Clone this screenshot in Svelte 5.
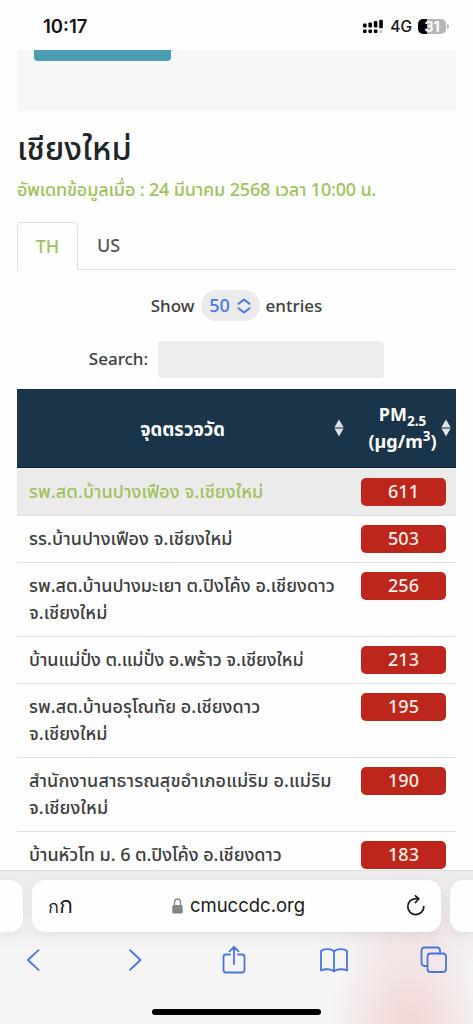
<script>
  const rows = [
    { lines: ['รพ.สต.บ้านปางเฟือง จ.เชียงใหม่'], value: 611, active: true, tracking: 0.08 },
    { lines: ['รร.บ้านปางเฟือง จ.เชียงใหม่'], value: 503, tracking: 0.08 },
    { lines: ['รพ.สต.บ้านปางมะเยา ต.ปิงโค้ง อ.เชียงดาว', 'จ.เชียงใหม่'], value: 256, tracking: 0.03 },
    { lines: ['บ้านแม่ปั๋ง ต.แม่ปั๋ง อ.พร้าว จ.เชียงใหม่'], value: 213, tracking: -0.08 },
    { lines: ['รพ.สต.บ้านอรุโณทัย อ.เชียงดาว', 'จ.เชียงใหม่'], value: 195, tracking: 0.04 },
    { lines: ['สำนักงานสาธารณสุขอำเภอแม่ริม อ.แม่ริม', 'จ.เชียงใหม่'], value: 190, tracking: 0.13 },
    { lines: ['บ้านหัวโท ม. 6 ต.ปิงโค้ง อ.เชียงดาว'], value: 183, tracking: -0.06 }
  ];
</script>

{#snippet sorter()}
  <svg class="sorter" width="10" height="18" viewBox="0 0 10 18">
    <path d="M5 0.5 9.5 8H.5Z" fill="#dde2e5" />
    <path d="M5 17.5 9.5 9.5H.5Z" fill="#dde2e5" />
    <path d="M.5 8.7h9" stroke="#7d8588" stroke-width="1.4" />
  </svg>
{/snippet}

<div class="phone">
  <header class="status">
    <span class="time">10:17</span>
    <div class="indicators">
      <svg width="20" height="15" viewBox="0 0 20 15">
        <g fill="#000">
          <rect x="0" y="4.5" width="3.6" height="4" rx="1" />
          <rect x="5.4" y="3.5" width="3.6" height="5" rx="1" />
          <rect x="10.8" y="2" width="3.6" height="6.5" rx="1" />
          <rect x="16.2" y="0.7" width="3.6" height="8.5" rx="1" />
          <rect x="0" y="10.5" width="3.6" height="3.6" rx="1" />
          <rect x="5.4" y="10.5" width="3.6" height="3.6" rx="1" />
          <rect x="10.8" y="10.5" width="3.6" height="3.6" rx="1" />
        </g>
        <rect x="16.2" y="10.7" width="3.4" height="3.4" rx="1" fill="#ccc" />
      </svg>
      <span class="net">4G</span>
      <span class="battery"><b>31</b></span>
      <span class="nub"></span>
    </div>
  </header>

  <main class="page">
    <section class="panel"><div class="button"></div></section>
    <h1><span class="t">เชียงใหม่</span></h1>
    <p class="updated"><span class="t">อัพเดทข้อมูลเมื่อ : 24 มีนาคม 2568 เวลา 10:00 น.</span></p>

    <nav class="tabs">
      <div class="tab on">TH</div>
      <div class="tab">US</div>
    </nav>

    <div class="length">
      <span>Show</span>
      <span class="select">50
        <svg width="14" height="16" viewBox="0 0 14 16" fill="none" stroke="#4878e6" stroke-width="2" stroke-linecap="round" stroke-linejoin="round">
          <path d="M1.5 5.8 7 1.5l5.5 4.3M1.5 10.2 7 14.500l5.5-4.3" />
        </svg>
      </span>
      <span>entries</span>
    </div>
    <div class="search"><span>Search:</span><div class="field"></div></div>

    <div class="table">
      <div class="row head">
        <div class="place"><span class="t">จุดตรวจวัด</span>{@render sorter()}</div>
        <div class="pm"><span>PM<sub>2.5</sub><br />(µg/m<sup>3</sup>)</span>{@render sorter()}</div>
      </div>
      {#each rows as row}
        <div class="row" class:active={row.active}>
          <div class="name" style:letter-spacing="{row.tracking}px">
            {#each row.lines as line}<div><span class="t">{line}</span></div>{/each}
          </div>
          <div class="badge">{row.value}</div>
        </div>
      {/each}
    </div>
  </main>

  <footer class="safari">
    <div class="cards">
      <div class="card edge"></div>
      <div class="card address">
        <span class="aa"><small>ก</small>ก</span>
        <span class="domain">
          <svg width="11" height="16" viewBox="0 0 11 16">
            <path d="M2.5 7.5V4.2a3 3.2 0 0 1 6 0v3.3" fill="none" stroke="#8b8b8d" stroke-width="1.4" />
            <rect x="0.3" y="7" width="10.4" height="8.5" rx="1.5" fill="#858587" />
          </svg>
          cmuccdc.org
        </span>
        <svg class="reload" width="20" height="22" viewBox="0 0 20 22" fill="none" stroke="#1a1a1a" stroke-width="1.7" stroke-linecap="round" stroke-linejoin="round">
          <path d="M17.8 11.500A8 8 0 1 1 9.800 3.600h2.700" />
          <path d="M9.500 .9 12.800 3.800 9.500 7.500" />
        </svg>
      </div>
      <div class="card edge"></div>
    </div>
    <div class="tools">
      <svg width="28" height="28" viewBox="0 0 28 28"><path d="M18.5 4.2 8 14l10.5 9.8" /></svg>
      <svg width="28" height="28" viewBox="0 0 28 28"><path d="M10 4.2 20.500 14 10 23.800" /></svg>
      <svg width="28" height="28" viewBox="0 0 28 28"><path d="M10 8.5H6A2.500 2.500 0 0 0 3.500 11v13A2.500 2.500 0 0 0 6 26.500h16a2.500 2.500 0 0 0 2.500-2.500V11A2.500 2.500 0 0 0 22 8.500h-4M14 18V1M9.500 5.300 14 .8l4.500 4.500" /></svg>
      <svg width="28" height="28" viewBox="0 0 28 28"><path d="M14 5.5V25M14 5.500C11.500 2.600 4 2.300 1 5v19.500c3.700-1.800 10.300-1.800 13 .8 2.700-2.600 9.300-2.600 13-.8V5C24 2.300 16.500 2.600 14 5.500Z" /></svg>
      <svg width="28" height="28" viewBox="0 0 28 28"><path d="M7.500 20H4.500a3 3 0 0 1-3-3V4.500a3 3 0 0 1 3-3H17a3 3 0 0 1 3 3v3" /><rect x="7.500" y="7.500" width="18.500" height="18.500" rx="3" /></svg>
    </div>
    <div class="home"></div>
  </footer>
</div>

<style>
  :global(body) { background: #fff; }
  .phone {
    width: 473px; height: 1024px; overflow: hidden; display: flex; flex-direction: column;
    background: #fefefe; color: #3d3d3f; font: 500 18px/27px "Noto Sans", "Noto Sans Thai", sans-serif;
  }
  .t { white-space: nowrap; }
  .status { height: 50px; flex: none; display: flex; justify-content: space-between; padding: 0 24px 0 43px; font-family: Inter, sans-serif; color: #111; }
  .time { font-size: 18.5px; font-weight: 600; line-height: 53px; }
  .indicators { display: flex; align-items: center; height: 52px; }
  .net { font-size: 15.5px; margin: 0 6px 0 7px; }
  .battery { width: 28px; height: 15px; border-radius: 5px; background: linear-gradient(90deg, #000 31%, #b5b5b5 31%); color: #fff; font-size: 14.5px; line-height: 15px; text-align: center; }
  .nub { width: 2px; height: 5px; margin-left: 1px; border-radius: 0 2px 2px 0; background: #bbb; }
  .page { height: 820px; flex: none; overflow: hidden; padding: 0 17px; }
  .panel { height: 61px; background: #f7f7f7; padding-left: 17px; }
  .button { width: 137px; height: 11px; background: #4c9eb5; border-radius: 0 0 4px 4px; }
  h1 { margin: 17px 0 0; height: 40px; font-size: 32.5px; line-height: 40px; font-weight: 500; color: #212529; }
  .updated { margin: 8px 0 0; height: 27px; color: #a1c15f; letter-spacing: -0.17px; }
  .tabs { display: flex; height: 48px; margin-top: 19px; border-bottom: 1px solid #e3e3e3; box-sizing: border-box; }
  .tab { width: 61px; height: 47px; line-height: 47px; text-align: center; color: #555; }
  .tab.on { height: 48px; border: 1px solid #e0e0e0; border-bottom: 0; border-radius: 5px 5px 0 0; background: #fefefe; box-sizing: border-box; color: #a1c15f; line-height: 46px; }
  .length { display: flex; justify-content: center; gap: 6px; margin-top: 20px; height: 31px; line-height: 31px; font-size: 17px; }
  .select { display: flex; align-items: center; justify-content: center; gap: 7px; width: 59px; border-radius: 16px; background: #ebebeb; color: #4878e6; font-size: 18px; }
  .search { display: flex; justify-content: center; gap: 10px; margin: 20px 0 11px; height: 37px; line-height: 36px; font-size: 17px; }
  .field { width: 226px; border-radius: 4px; background: #ededed; }
  .row { display: flex; justify-content: space-between; box-sizing: border-box; padding: 9px 10px 10px 12px; border-bottom: 1px solid #dee0e3; }
  .row.active { height: 48px; padding-top: 10px; background: #ebebec; color: #a1c15f; }
  .badge { width: 85px; height: 28px; margin-bottom: -1px; border-radius: 5px; background: #bd261a; color: #fbeeeb; text-align: center; line-height: 27px; flex: none; }
  .head { height: 79px; padding: 0; background: #1a3449; border-bottom: 1px solid #10202c; color: #fff; font-weight: 700; align-items: center; }
  .place { width: 327px; display: flex; align-items: center; justify-content: flex-end; gap: 109px; font-size: 18.5px; }
  .pm { width: 92px; display: flex; align-items: center; text-align: center; padding-right: 5px; box-sizing: border-box; }
  .pm span { flex: 1; }
  sub, sup { font-size: 13.5px; line-height: 0; }
  .safari { height: 154px; flex: none; box-sizing: border-box; border-top: 1px solid #ddd; background: radial-gradient(ellipse 80px 90px at 409px 150px, #f2d8d8 0, #f3dddd 30%, #f3dddd00 100%), radial-gradient(ellipse 95px 65px at 412px 58px, #f0e2e2 0, #f0e2e200 100%), linear-gradient(180deg, #ececed 0, #f1f1f2 60px, #f5f5f6 80px); display: flex; flex-direction: column; align-items: center; }
  .cards { display: flex; width: 100%; gap: 9px; margin-top: 8.5px; height: 52px; }
  .card { border-radius: 13px; background: #fefefe; box-shadow: 0 3px 12px #0000000f; }
  .edge { width: 23px; flex: none; }
  .edge:first-child { border-radius: 0 13px 13px 0; }
  .edge:last-child { border-radius: 13px 0 0 13px; }
  .address { width: 409px; flex: none; box-sizing: border-box; padding: 0 15px 0 16px; display: flex; justify-content: space-between; align-items: center; color: #1a1a1a; font-family: Inter, sans-serif; font-weight: 400; font-size: 18.5px; }
  .aa { font-size: 23px; }
  .aa small { font-size: 18px; }
  .domain { display: flex; align-items: center; gap: 7px; margin-right: 2px; }
  .tools { width: 100%; display: flex; justify-content: space-between; box-sizing: border-box; padding: 0 25px 0 20px; margin-top: 14px; }
  .tools svg { fill: none; stroke: #4777dc; stroke-width: 1.8; stroke-linecap: round; stroke-linejoin: round; }
  .home { width: 169px; height: 6px; border-radius: 3px; background: #000; margin-top: 35px; }
</style>
